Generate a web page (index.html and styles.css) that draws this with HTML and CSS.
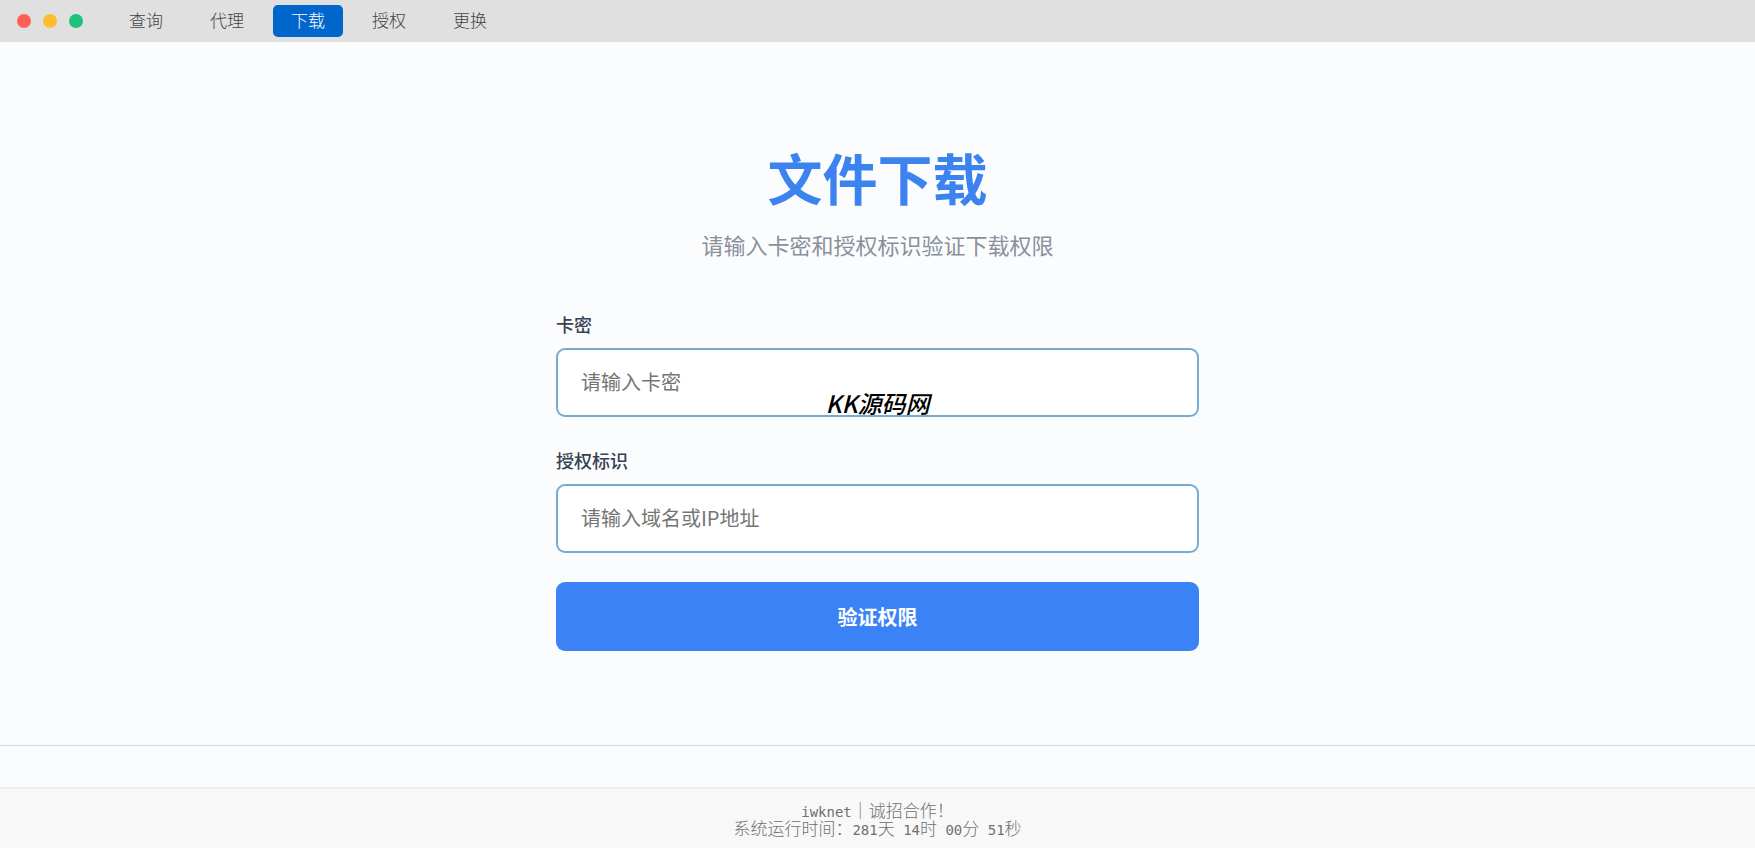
FILE: index.html
```html
<!DOCTYPE html>
<html lang="zh-CN">

<head>
    <meta charset="UTF-8">
    <meta name="viewport" content="width=device-width, initial-scale=1.0">
    <title>文件下载</title>
    <link rel="stylesheet" href="styles.css">
</head>

<body>
    <header class="titlebar">
        <div class="dots">
            <span class="dot red"></span>
            <span class="dot yellow"></span>
            <span class="dot green"></span>
        </div>
        <nav class="menu">
            <a href="#query">查询</a>
            <a href="#agent">代理</a>
            <a href="#download" class="active">下载</a>
            <a href="#auth">授权</a>
            <a href="#change">更换</a>
        </nav>
    </header>

    <main>
        <h1>文件下载</h1>
        <p class="subtitle">请输入卡密和授权标识验证下载权限</p>
        <form class="download-form">
            <div class="field">
                <label for="card">卡密</label>
                <input type="text" id="card" name="card" placeholder="请输入卡密">
                <span class="watermark">KK源码网</span>
            </div>
            <div class="field">
                <label for="domain">授权标识</label>
                <input type="text" id="domain" name="domain" placeholder="请输入域名或IP地址">
            </div>
            <button type="button" class="submit">验证权限</button>
        </form>
    </main>

    <footer>
        <p><span class="mono">iwknet</span>｜诚招合作！</p>
        <p>系统运行时间：<span class="mono">281</span>天<span class="mono"> 14</span>时<span class="mono"> 00</span>分<span class="mono"> 51</span>秒</p>
    </footer>
</body>

</html>
```

FILE: styles.css
```css
* {
    box-sizing: border-box;
}

body {
    margin: 0;
    min-height: 100vh;
    display: flex;
    flex-direction: column;
    background: #fafcfe;
    font-family: "Noto Sans CJK SC", sans-serif;
}

/* Title bar */

.titlebar {
    display: flex;
    align-items: center;
    gap: 28px;
    height: 42px;
    padding: 0 17px;
    background: #e0e0e0;
}

.dots {
    display: flex;
    gap: 12px;
}

.dot {
    width: 14px;
    height: 14px;
    border-radius: 50%;
}

.red {
    background: #ff5f57;
}

.yellow {
    background: #ffbd2e;
}

.green {
    background: #1fc17c;
}

.menu {
    display: flex;
    gap: 11px;
}

.menu a {
    padding: 0 18px 2px;
    border-radius: 5px;
    color: #444;
    font-size: 17px;
    font-weight: 300;
    line-height: 30px;
    text-decoration: none;
}

.menu .active {
    background: #0066cc;
    color: #fff;
}

/* Form */

main {
    flex: 1;
    padding: 96px 24px 0;
    border-bottom: 1px solid #d5d8dc;
}

h1 {
    margin: 0;
    color: #3c83f0;
    font-size: 55px;
    line-height: 76px;
    text-align: center;
}

.subtitle {
    margin: 14px 0 50px;
    color: #8a909a;
    font-size: 22px;
    line-height: 32px;
    text-align: center;
}

.download-form {
    max-width: 643px;
    margin: 0 auto;
}

.field {
    position: relative;
    margin-bottom: 29px;
}

label {
    display: block;
    margin-bottom: 10px;
    color: #374151;
    font-size: 18px;
    font-weight: 500;
    line-height: 28px;
}

input {
    display: block;
    width: 100%;
    height: 69px;
    padding: 0 23px 2px;
    border: 2px solid #75acd0;
    border-radius: 9px;
    background: #fff;
    font-family: inherit;
    font-size: 20px;
}

input::placeholder {
    color: #757575;
}

.watermark {
    position: absolute;
    bottom: 2px;
    left: 0;
    right: 0;
    color: #000;
    font-size: 24px;
    font-style: italic;
    font-weight: 500;
    line-height: 24px;
    text-align: center;
    pointer-events: none;
}

.submit {
    display: block;
    width: 100%;
    height: 69px;
    border: none;
    border-radius: 9px;
    background: #3b82f6;
    color: #fff;
    font-family: inherit;
    font-size: 20px;
    font-weight: 700;
    cursor: pointer;
}

/* Footer */

footer {
    margin-top: 41px;
    padding: 12px 0 11px;
    border-top: 2px solid #eee;
    background: #f8f8f8;
    color: #707070;
    font-size: 17px;
    font-weight: 300;
    line-height: 18px;
    text-align: center;
}

footer p {
    margin: 0;
}

.mono {
    font-family: "DejaVu Sans Mono", monospace;
    font-size: 14px;
    line-height: 1;
    white-space: pre;
}
```
